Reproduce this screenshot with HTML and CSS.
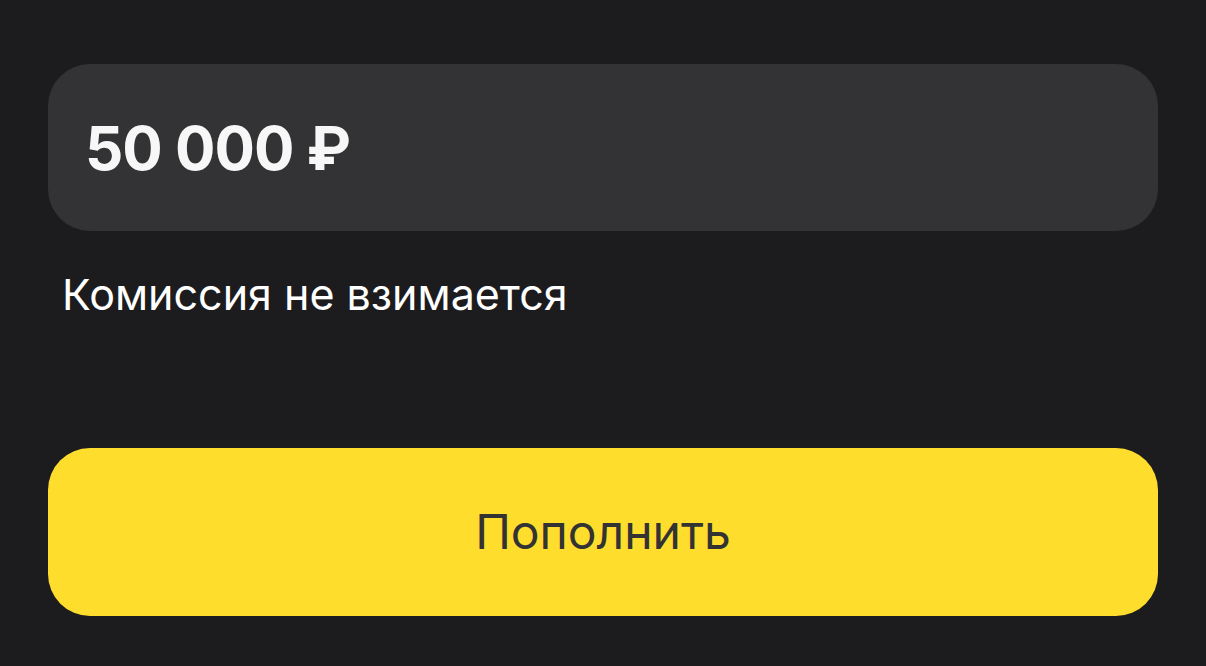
FILE: index.html
```html
<!DOCTYPE html>
<html>
<head>
  <title>Пополнение</title>
  <link rel="stylesheet" href="styles.css">
</head>
<body>
  <div class="page">
    <div class="amount-field">
      <span class="amount">50 000 ₽</span>
    </div>
    <p class="hint">Комиссия не взимается</p>
    <button class="submit">Пополнить</button>
  </div>
</body>
</html>
```

FILE: styles.css
```css
body {
  margin: 0;
  background-color: #1c1c1e;
  font-family: Inter, "Noto Sans", sans-serif;
}
.page {
  padding: 64px 48px 0 48px;
}
.amount-field {
  height: 167px;
  background-color: #333335;
  border-radius: 42px;
  display: flex;
  align-items: center;
  padding-left: 37px;
}
.amount {
  color: #f7f7f7;
  font-size: 60px;
  font-weight: 700;
  letter-spacing: -1px;
}
.hint {
  margin: 38px 0 0 14px;
  color: #ffffff;
  font-size: 43px;
  line-height: 1.2;
}
.submit {
  display: block;
  width: 100%;
  height: 168px;
  margin-top: 127px;
  background-color: #ffdd2d;
  border: none;
  border-radius: 42px;
  color: #333333;
  font-family: Inter, "Noto Sans", sans-serif;
  font-size: 48px;
  cursor: pointer;
}
```
